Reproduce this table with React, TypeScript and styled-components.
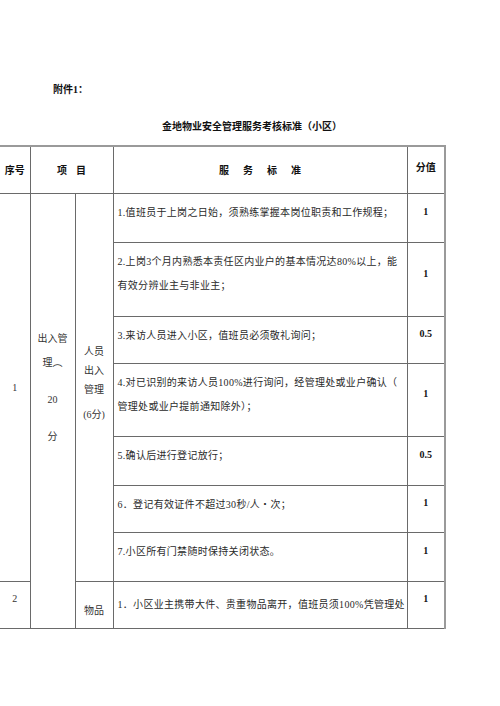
import React from "react";
import styled, { createGlobalStyle } from "styled-components";

const GlobalStyle = createGlobalStyle`
  html, body {
    margin: 0;
    padding: 0;
    background: #fff;
  }
  body {
    font-family: "Liberation Serif", "Noto Sans CJK SC", serif;
    color: #222;
  }
`;

const Page = styled.div`
  width: 500px;
  height: 706px;
  overflow: hidden;
  padding-top: 83px;
  box-sizing: border-box;
`;

const Attachment = styled.div`
  margin-left: 53px;
  font-size: 10px;
  font-weight: 700;
  line-height: 14px;
  color: #111;
`;

const Title = styled.h1`
  margin: 23px 0 0 0;
  text-align: center;
  font-size: 10px;
  font-weight: 700;
  line-height: 14px;
  color: #111;
  padding-left: 4px;
`;

const Table = styled.table`
  margin-top: 11px;
  width: 445px;
  table-layout: fixed;
  border-collapse: collapse;
  border-top: 2px solid #9a9a9a;
  border-right: 2px solid #9a9a9a;
  font-size: 10px;

  td,
  th {
    border: 1px solid #6a6a6a;
    padding: 0;
    box-sizing: border-box;
    overflow: hidden;
  }

  tr > :first-child {
    border-left: none;
  }
`;

const Th = styled.th<{ $top?: number }>`
  font-weight: 700;
  color: #111;
  vertical-align: ${(p) => (p.$top ? "top" : "middle")};
  padding-top: ${(p) => p.$top || 0}px !important;
  text-align: center;
`;

const Spaced = styled.span<{ $gap: number }>`
  display: inline-flex;
  gap: ${(p) => p.$gap}px;
`;

const Criterion = styled.td<{ $top?: number }>`
  vertical-align: top;
  padding: ${(p) => p.$top ?? 7}px 4px 0 4px !important;
  line-height: 24px;
  color: #2a2a2a;
  letter-spacing: 0.3px;
  white-space: nowrap;
`;

const Score = styled.td`
  text-align: center;
  vertical-align: middle;
  padding-bottom: 12px !important;
  font-weight: 700;
  color: #111;
`;

const Num = styled.td<{ $bottom?: number }>`
  text-align: center;
  vertical-align: middle;
  padding-bottom: ${(p) => p.$bottom || 0}px !important;
  color: #333;
`;

const Category = styled.td`
  vertical-align: top;
  text-align: center;
  padding-top: 133px !important;
  color: #333;
`;

const CatLine = styled.div<{ $gap?: number }>`
  line-height: 24px;
  margin-top: ${(p) => p.$gap || 0}px;
`;

const Sub = styled.td<{ $top?: number }>`
  vertical-align: ${(p) => (p.$top ? "top" : "middle")};
  padding-top: ${(p) => p.$top || 0}px !important;
  padding-bottom: ${(p) => (p.$top ? 0 : 8)}px !important;
  text-align: center;
  color: #333;
`;

const SubLine = styled.div<{ $gap?: number }>`
  line-height: 19px;
  margin-top: ${(p) => p.$gap || 0}px;
`;

const rows = [
  { h: 49, lines: ["1.值班员于上岗之日始，须熟练掌握本岗位职责和工作规程；"], score: "1" },
  {
    h: 74,
    lines: ["2.上岗3个月内熟悉本责任区内业户的基本情况达80%以上，能", "有效分辨业主与非业主；"],
    score: "1",
  },
  { h: 47, lines: ["3.来访人员进入小区，值班员必须敬礼询问；"], score: "0.5" },
  {
    h: 73,
    lines: ["4.对已识别的来访人员100%进行询问，经管理处或业户确认（", "管理处或业户提前通知除外）；"],
    score: "1",
  },
  { h: 49, lines: ["5.确认后进行登记放行；"], score: "0.5" },
  { h: 47, lines: ["6．登记有效证件不超过30秒/人・次；"], score: "1" },
  { h: 49, lines: ["7.小区所有门禁随时保持关闭状态。"], score: "1" },
];

export default function App() {
  return (
    <Page>
      <GlobalStyle />
      <Attachment>附件1：</Attachment>
      <Title>金地物业安全管理服务考核标准（小区）</Title>
      <Table>
        <colgroup>
          <col style={{ width: 30 }} />
          <col style={{ width: 45 }} />
          <col style={{ width: 38 }} />
          <col style={{ width: 294 }} />
          <col style={{ width: 38 }} />
        </colgroup>
        <tbody>
          <tr style={{ height: 47 }}>
            <Th>序号</Th>
            <Th colSpan={2}>
              <Spaced $gap={9}>
                <span>项</span>
                <span>目</span>
              </Spaced>
            </Th>
            <Th>
              <Spaced $gap={14}>
                <span>服</span>
                <span>务</span>
                <span>标</span>
                <span>准</span>
              </Spaced>
            </Th>
            <Th $top={12}>分值</Th>
          </tr>
          {rows.map((r, i) => (
            <tr key={i} style={{ height: r.h }}>
              {i === 0 && (
                <>
                  <Num rowSpan={7}>1</Num>
                  <Category rowSpan={8}>
                    <CatLine>出入管</CatLine>
                    <CatLine>理︵</CatLine>
                    <CatLine $gap={13}>20</CatLine>
                    <CatLine $gap={13}>分</CatLine>
                  </Category>
                  <Sub rowSpan={7}>
                    <SubLine>人员</SubLine>
                    <SubLine>出入</SubLine>
                    <SubLine>管理</SubLine>
                    <SubLine $gap={6}>(6分)</SubLine>
                  </Sub>
                </>
              )}
              <Criterion>
                {r.lines.map((l, j) => (
                  <div key={j}>{l}</div>
                ))}
              </Criterion>
              <Score>{r.score}</Score>
            </tr>
          ))}
          <tr style={{ height: 47 }}>
            <Num $bottom={12}>2</Num>
            <Sub $top={20}>物品</Sub>
            <Criterion $top={11}>1．小区业主携带大件、贵重物品离开，值班员须100%凭管理处</Criterion>
            <Score>1</Score>
          </tr>
        </tbody>
      </Table>
    </Page>
  );
}
